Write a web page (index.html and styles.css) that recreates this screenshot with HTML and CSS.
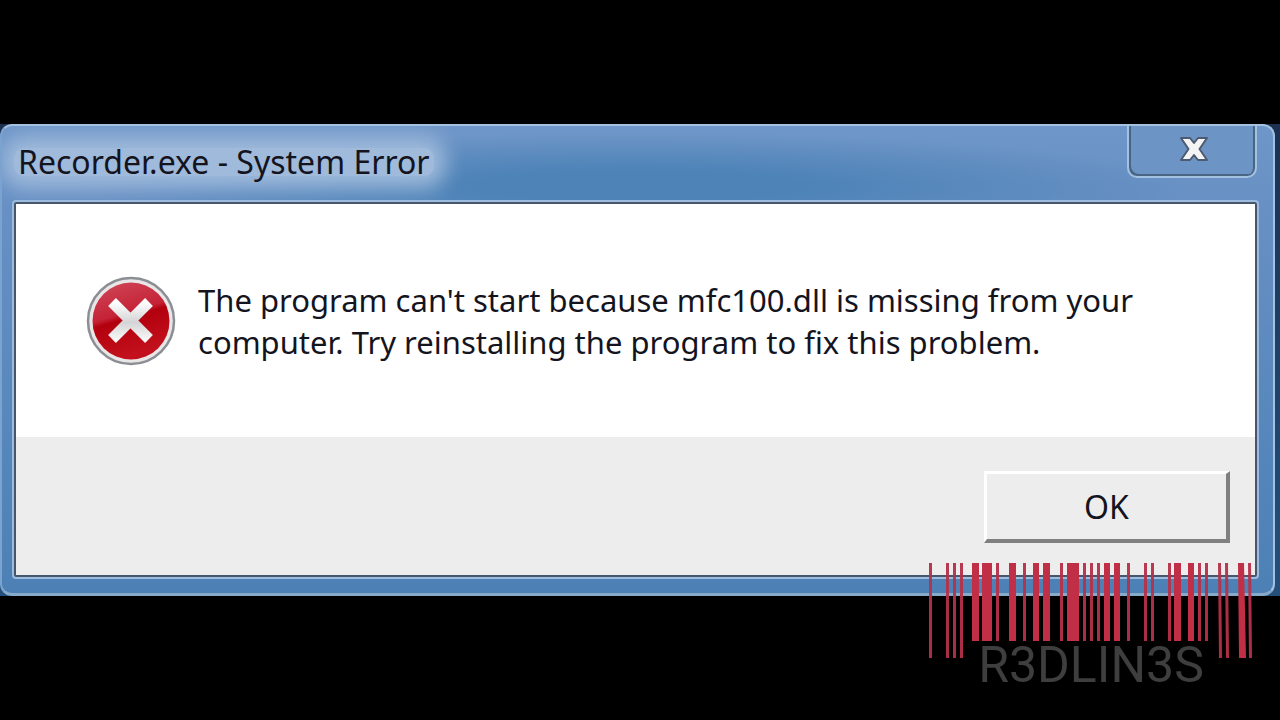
FILE: index.html
```html
<!DOCTYPE html>
<html lang="en">
<head>
    <meta charset="utf-8">
    <title>Recorder.exe - System Error</title>
    <link rel="stylesheet" href="styles.css">
</head>
<body>

<main class="desktop">
    <section class="dialog" role="alertdialog" aria-labelledby="title" aria-describedby="message">
        <header class="titlebar">
            <h1 id="title" class="title">Recorder.exe - System Error</h1>
            <button class="close" aria-label="Close">
                <svg width="32" height="28" viewBox="0 0 32 28">
                    <path d="M3 3h9l4 5 4-5h9l-7.500 11L29 25h-9l-4-5-4 5H3l7.500-11z" fill="#f4f4f4" stroke="#4d5b70" stroke-width="2" stroke-linejoin="round"/>
                </svg>
            </button>
        </header>

        <div class="client">
            <div class="content">
                <svg class="icon" width="90" height="90" viewBox="0 0 90 90">
                    <defs>
                        <linearGradient id="red" x1="0" y1="0" x2="0.300" y2="1">
                            <stop offset="0" stop-color="#cf4a5a"/>
                            <stop offset="0.480" stop-color="#c52236"/>
                            <stop offset="0.550" stop-color="#b3000e"/>
                            <stop offset="1" stop-color="#c2101c"/>
                        </linearGradient>
                        <linearGradient id="cross" x1="0" y1="0" x2="0" y2="1">
                            <stop offset="0" stop-color="#fff"/>
                            <stop offset="0.550" stop-color="#d4d4d6"/>
                            <stop offset="1" stop-color="#f6f6f6"/>
                        </linearGradient>
                    </defs>
                    <circle cx="45" cy="45" r="43" fill="#e9e6e8" stroke="#8b8e93" stroke-width="2.500"/>
                    <circle cx="45" cy="45" r="38.500" fill="url(#red)"/>
                    <path d="M26 26l37 37M63 26L26 63" stroke="url(#cross)" stroke-width="11"/>
                </svg>
                <p id="message" class="message">The program can't start because mfc100.dll is missing from your computer. Try reinstalling the program to fix this problem.</p>
            </div>
            <footer class="actions">
                <button class="ok">OK</button>
            </footer>
        </div>
    </section>
</main>

<div class="watermark">
    <svg class="bars" width="324" height="95" viewBox="929 563 324 95">
        <path class="thin" d="M929 563h3v95h-3zM946 563h3v95h-3zM953 563h3v95h-3zM960 563h3v95h-3zM996 563h3v78h-3zM1023 563h3v78h-3zM1060 563h3v78h-3zM1083 563h3v78h-3zM1090 563h3v78h-3zM1097 563h3v78h-3zM1127 563h3v78h-3zM1144 563h3v78h-3zM1151 563h3v78h-3zM1168 563h3v78h-3zM1198 563h3v78h-3zM1205 563h3v78h-3zM1218 563h3l1 95h-3zM1225 563h3l1 95h-3zM1248 563h3l1 95h-3z"/>
        <path class="thick" d="M972 563h7v78h-7zM982 563h10v78h-10zM1009 563h7v78h-7zM1033 563h6v78h-6zM1043 563h7v78h-7zM1067 563h12v78h-12zM1104 563h6v78h-6zM1114 563h6v78h-6zM1174 563h7v78h-7zM1188 563h6v78h-6zM1238 563h6l2 95h-7z"/>
    </svg>
    <span class="brand">R3DLIN3S</span>
</div>

</body>
</html>
```
FILE: styles.css
```css
* {
  box-sizing: border-box;
}

body {
  margin: 0;
  min-height: 100vh;
  display: flex;
  align-items: center;
  position: relative;
  background: #000;
  color: #14141e;
  font-family: "Noto Sans", "Open Sans", sans-serif;
}

h1,
p {
  margin: 0;
  font-weight: 400;
}

button {
  font: inherit;
  color: inherit;
}

.desktop {
  flex: 1;
  padding-right: 5px;
  background: linear-gradient(#1c3152, #24507c);
}

.dialog {
  padding: 0 16px 16px 12px;
  border: 2px solid #a3c1e0;
  border-left-color: #7ba3cf;
  border-bottom: 3px solid #86aac8;
  border-radius: 12px;
  background:
    radial-gradient(ellipse at 50% 60px, #4d83b7 0, #4d83b7 160px, transparent 560px) no-repeat 0 0 / 100% 100px,
    linear-gradient(#6f96c8, #6890c4 80px, #5586bb 70%, #4d80b5);
}

.titlebar {
  display: flex;
  justify-content: space-between;
  align-items: flex-start;
  height: 76px;
}

.title {
  margin-top: 22px;
  padding: 0 4px;
  border-radius: 10px;
  background: #9fbadb;
  box-shadow: 0 0 20px 12px #9fbadb;
  font-size: 32px;
  line-height: 28px;
  clip-path: inset(-22px -40px -26px -12px);
}

.close {
  width: 130px;
  height: 52px;
  padding: 0 0 4px 4px;
  border: 2px solid #a3c1e0;
  border-top: 0;
  border-radius: 0 0 10px 10px;
  box-shadow: inset 2px -2px #4a6484, inset -2px 0 #4a6484;
  background: #6c94c5;
}

.close svg {
  display: block;
  margin: auto;
}

.client {
  border: 2px solid #46566b;
  outline: 2px solid #9dbcdf;
  border-radius: 2px;
  background: #fff;
}

.content {
  display: flex;
  align-items: center;
  gap: 22px;
  min-height: 233px;
  padding: 0 70px;
}

.icon {
  flex: none;
}

.message {
  font-size: 31px;
  line-height: 42px;
}

.actions {
  display: flex;
  justify-content: flex-end;
  padding: 34px 25px 32px;
  background: #ededed;
}

.ok {
  width: 246px;
  height: 72px;
  padding: 0;
  border: 3px solid;
  border-color: #fff #808080 #808080 #fff;
  border-width: 3px 4px 4px 3px;
  background: #ededed;
  font-size: 32px;
}

.watermark {
  position: absolute;
  right: 27px;
  bottom: 30px;
  display: flex;
  flex-direction: column;
  align-items: center;
}

.bars {
  display: block;
}

.thin {
  fill: #b5304a;
  opacity: 0.95;
}

.thick {
  fill: #c02f45;
}

.brand {
  margin-top: -18px;
  color: #3e3e3e;
  font: 50px/50px Roboto, sans-serif;
}
```
